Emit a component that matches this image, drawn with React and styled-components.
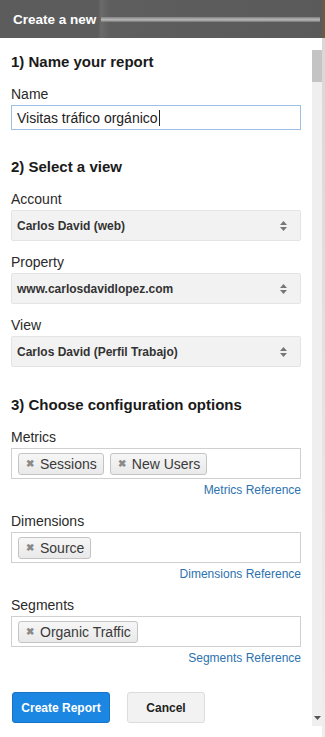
import React from 'react';
import styled, { createGlobalStyle } from 'styled-components';

const GlobalStyle = createGlobalStyle`
  html, body {
    margin: 0;
    padding: 0;
    background: #ffffff;
  }
  body {
    font-family: "Liberation Sans", Arial, sans-serif;
    color: #222;
  }
`;

const Frame = styled.div`
  width: 325px;
  height: 737px;
  overflow: hidden;
  display: flex;
  flex-direction: column;
  background: #fff;
`;

const Header = styled.div`
  height: 38px;
  flex: none;
  display: flex;
  align-items: center;
  background: linear-gradient(90deg, #5c5c5c 0, #5c5c5c 98px, #6a6a6a 101px, #5e5e5e 110px, #5a5a5a 100%);
  border-right: 3px solid #6b5a48;
`;

const HeaderTitle = styled.div`
  color: #fff;
  font-weight: bold;
  font-size: 13.5px;
  padding-left: 13px;
  padding-right: 5px;
`;

const HeaderStripe = styled.div`
  flex: 1;
  height: 5px;
  margin-right: 2px;
  background: linear-gradient(180deg, #8a8a8a 0, #b4b4b4 35%, #cfcfcf 55%, #a2a2a2 80%, #7a7a7a 100%);
  opacity: 0.8;
`;

const Body = styled.div`
  flex: 1;
  display: flex;
  min-height: 0;
`;

const Content = styled.div`
  width: 290px;
  padding: 15px 10px 0 11px;
  display: flex;
  flex-direction: column;
`;

const Section = styled.div`
  display: flex;
  flex-direction: column;
  margin-bottom: ${p => p.gap || 0}px;
`;

const Heading = styled.div`
  font-size: 15px;
  font-weight: bold;
  line-height: 18px;
  color: #1a1a1a;
  margin-bottom: 14px;
`;

const Field = styled.div`
  display: flex;
  flex-direction: column;
  margin-bottom: ${p => p.gap || 0}px;
`;

const Label = styled.div`
  font-size: 14px;
  line-height: 18px;
  color: #2a2a2a;
  margin-bottom: 2px;
`;

const TextInput = styled.div`
  height: 23px;
  border: 1px solid #9dbfe3;
  display: flex;
  align-items: center;
  padding-left: 5px;
  font-size: 14px;
  color: #222;
`;

const Caret = styled.span`
  display: inline-block;
  width: 1px;
  height: 16px;
  background: #222;
  margin-left: 1px;
`;

const Select = styled.div`
  height: 29px;
  background: #f2f2f2;
  border: 1px solid #e4e4e4;
  border-radius: 2px;
  display: flex;
  align-items: center;
  justify-content: space-between;
  padding: 0 12px 0 5px;
  font-size: 12px;
  font-weight: bold;
  color: #333;
`;

const MultiBox = styled.div`
  height: 29px;
  border: 1px solid #cfcfcf;
  display: flex;
  align-items: center;
  gap: 6px;
  padding: 0 6px;
`;

const Chip = styled.div`
  height: 20px;
  border: 1px solid #c4c4c4;
  border-radius: 3px;
  background: linear-gradient(180deg, #f6f6f6, #e9e9e9);
  display: flex;
  align-items: center;
  gap: 6px;
  padding: 0 6px 0 7px;
  font-size: 14px;
  color: #3a3a3a;
`;

const ChipX = styled.span`
  font-size: 10px;
  font-weight: bold;
  color: #8a8a8a;
`;

const RefLink = styled.div`
  align-self: flex-end;
  font-size: 12px;
  line-height: 14px;
  color: #2b72b0;
  margin-top: 4px;
`;

const Actions = styled.div`
  display: flex;
  gap: 17px;
  margin-top: 27px;
  padding-left: 1px;
`;

const Button = styled.div`
  height: 31px;
  width: ${p => p.w}px;
  box-sizing: border-box;
  border-radius: 3px;
  display: flex;
  align-items: center;
  justify-content: center;
  font-size: 12px;
  font-weight: bold;
  background: ${p => p.primary ? '#1c87e3' : '#f2f2f2'};
  border: 1px solid ${p => p.primary ? '#1673c6' : '#dcdcdc'};
  color: ${p => p.primary ? '#fff' : '#222'};
`;

const Scrollbar = styled.div`
  width: 10px;
  margin-top: 12px;
  margin-left: 1px;
  height: 676px;
  background: #efefef;
  display: flex;
  flex-direction: column;
  justify-content: space-between;
  align-items: center;
`;

const Thumb = styled.div`
  width: 10px;
  height: 32px;
  background: #c4c4c4;
`;

const EdgeStrip = styled.div`
  width: 3px;
  margin-left: auto;
  background: linear-gradient(180deg, #d8d8d8, #eeeeee);
`;

const SortArrows = () => (
  <svg width="9" height="12" viewBox="0 0 9 12">
    <path d="M1 5 L4.5 1 L8 5 Z" fill="#777" />
    <path d="M1 7 L4.5 11 L8 7 Z" fill="#777" />
  </svg>
);

const DownArrow = () => (
  <svg width="7" height="4" viewBox="0 0 7 4" style={{ marginBottom: 6 }}>
    <path d="M0 0 L7 0 L3.5 4 Z" fill="#555" />
  </svg>
);

const Tag = ({ children }) => (
  <Chip>
    <ChipX>✖</ChipX>
    {children}
  </Chip>
);

const SelectField = ({ label, value, gap }) => (
  <Field gap={gap}>
    <Label>{label}</Label>
    <Select>
      <span>{value}</span>
      <SortArrows />
    </Select>
  </Field>
);

const TagField = ({ label, tags, link, gap }) => (
  <Field gap={gap}>
    <Label>{label}</Label>
    <MultiBox>
      {tags.map(t => <Tag key={t}>{t}</Tag>)}
    </MultiBox>
    <RefLink>{link}</RefLink>
  </Field>
);

export default function App() {
  return (
    <>
      <GlobalStyle />
      <Frame>
        <Header>
          <HeaderTitle>Create a new</HeaderTitle>
          <HeaderStripe />
        </Header>
        <Body>
          <Content>
            <Section gap={28}>
              <Heading>1) Name your report</Heading>
              <Field>
                <Label>Name</Label>
                <TextInput>
                  Visitas tráfico orgánico<Caret />
                </TextInput>
              </Field>
            </Section>

            <Section gap={29}>
              <Heading>2) Select a view</Heading>
              <SelectField label="Account" value="Carlos David (web)" gap={12} />
              <SelectField label="Property" value="www.carlosdavidlopez.com" gap={12} />
              <SelectField label="View" value="Carlos David (Perfil Trabajo)" />
            </Section>

            <Section>
              <Heading>3) Choose configuration options</Heading>
              <TagField label="Metrics" tags={['Sessions', 'New Users']} link="Metrics Reference" gap={15} />
              <TagField label="Dimensions" tags={['Source']} link="Dimensions Reference" gap={15} />
              <TagField label="Segments" tags={['Organic Traffic']} link="Segments Reference" />
            </Section>

            <Actions>
              <Button primary w={98}>Create Report</Button>
              <Button w={78}>Cancel</Button>
            </Actions>
          </Content>
          <Scrollbar>
            <Thumb />
            <DownArrow />
          </Scrollbar>
          <EdgeStrip />
        </Body>
      </Frame>
    </>
  );
}
